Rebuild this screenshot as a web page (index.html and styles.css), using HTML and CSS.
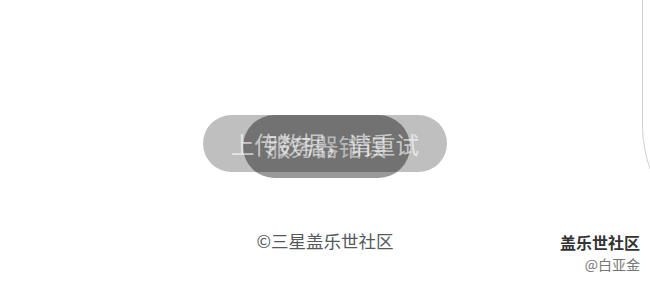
FILE: index.html
```html
<!DOCTYPE html>
<html lang="zh-CN">
<head>
<meta charset="utf-8">
<link rel="stylesheet" href="styles.css">
</head>
<body>
<div class="page">
  <div class="stage"></div>
  <footer class="footer">©三星盖乐世社区</footer>
</div>
<div class="edge-clip"><div class="frame-edge"></div></div>
<div class="toast toast-dark">服务器错误</div>
<div class="toast toast-light">上传数据，请重试</div>
<div class="watermark">
  <div class="wm-title">盖乐世社区</div>
  <div class="wm-sub">@白亚金</div>
</div>
</body>
</html>
```
FILE: styles.css
```css
html, body {
  margin: 0;
  padding: 0;
  background: #ffffff;
  width: 650px;
  height: 287px;
  overflow: hidden;
  font-family: "Noto Sans CJK SC", "Noto Sans", sans-serif;
}
.page {
  display: flex;
  flex-direction: column;
  height: 287px;
}
.stage {
  height: 228px;
}
.footer {
  text-align: center;
  font-size: 17.5px;
  line-height: 26px;
  color: #55595e;
}
.edge-clip {
  position: absolute;
  left: 0;
  top: 0;
  width: 650px;
  height: 287px;
  overflow: hidden;
  pointer-events: none;
}
.frame-edge {
  position: absolute;
  left: 642px;
  top: -10px;
  width: 140px;
  height: 265px;
  border-left: 1.5px solid #cfcfcf;
  border-bottom: 1.5px solid #cfcfcf;
  border-bottom-left-radius: 130px;
  box-sizing: border-box;
}
.toast {
  position: absolute;
  display: flex;
  align-items: center;
  justify-content: center;
  font-size: 23.5px;
  font-weight: 400;
  white-space: nowrap;
}
.toast-light {
  left: 203px;
  top: 115px;
  width: 244px;
  height: 57px;
  border-radius: 29px;
  background: rgba(0, 0, 0, 0.25);
  color: rgba(255, 255, 255, 0.62);
}
.toast-dark {
  left: 243px;
  top: 115px;
  width: 167px;
  height: 63px;
  border-radius: 32px;
  background: rgba(0, 0, 0, 0.4);
  color: rgba(255, 255, 255, 0.92);
  font-size: 24px;
  padding-bottom: 2px;
  box-sizing: border-box;
}
.watermark {
  position: absolute;
  right: 10px;
  top: 231px;
  text-align: right;
}
.wm-title {
  font-size: 16px;
  font-weight: 700;
  line-height: 22px;
  color: #333333;
}
.wm-sub {
  font-size: 14px;
  line-height: 22px;
  color: #777777;
}
```
